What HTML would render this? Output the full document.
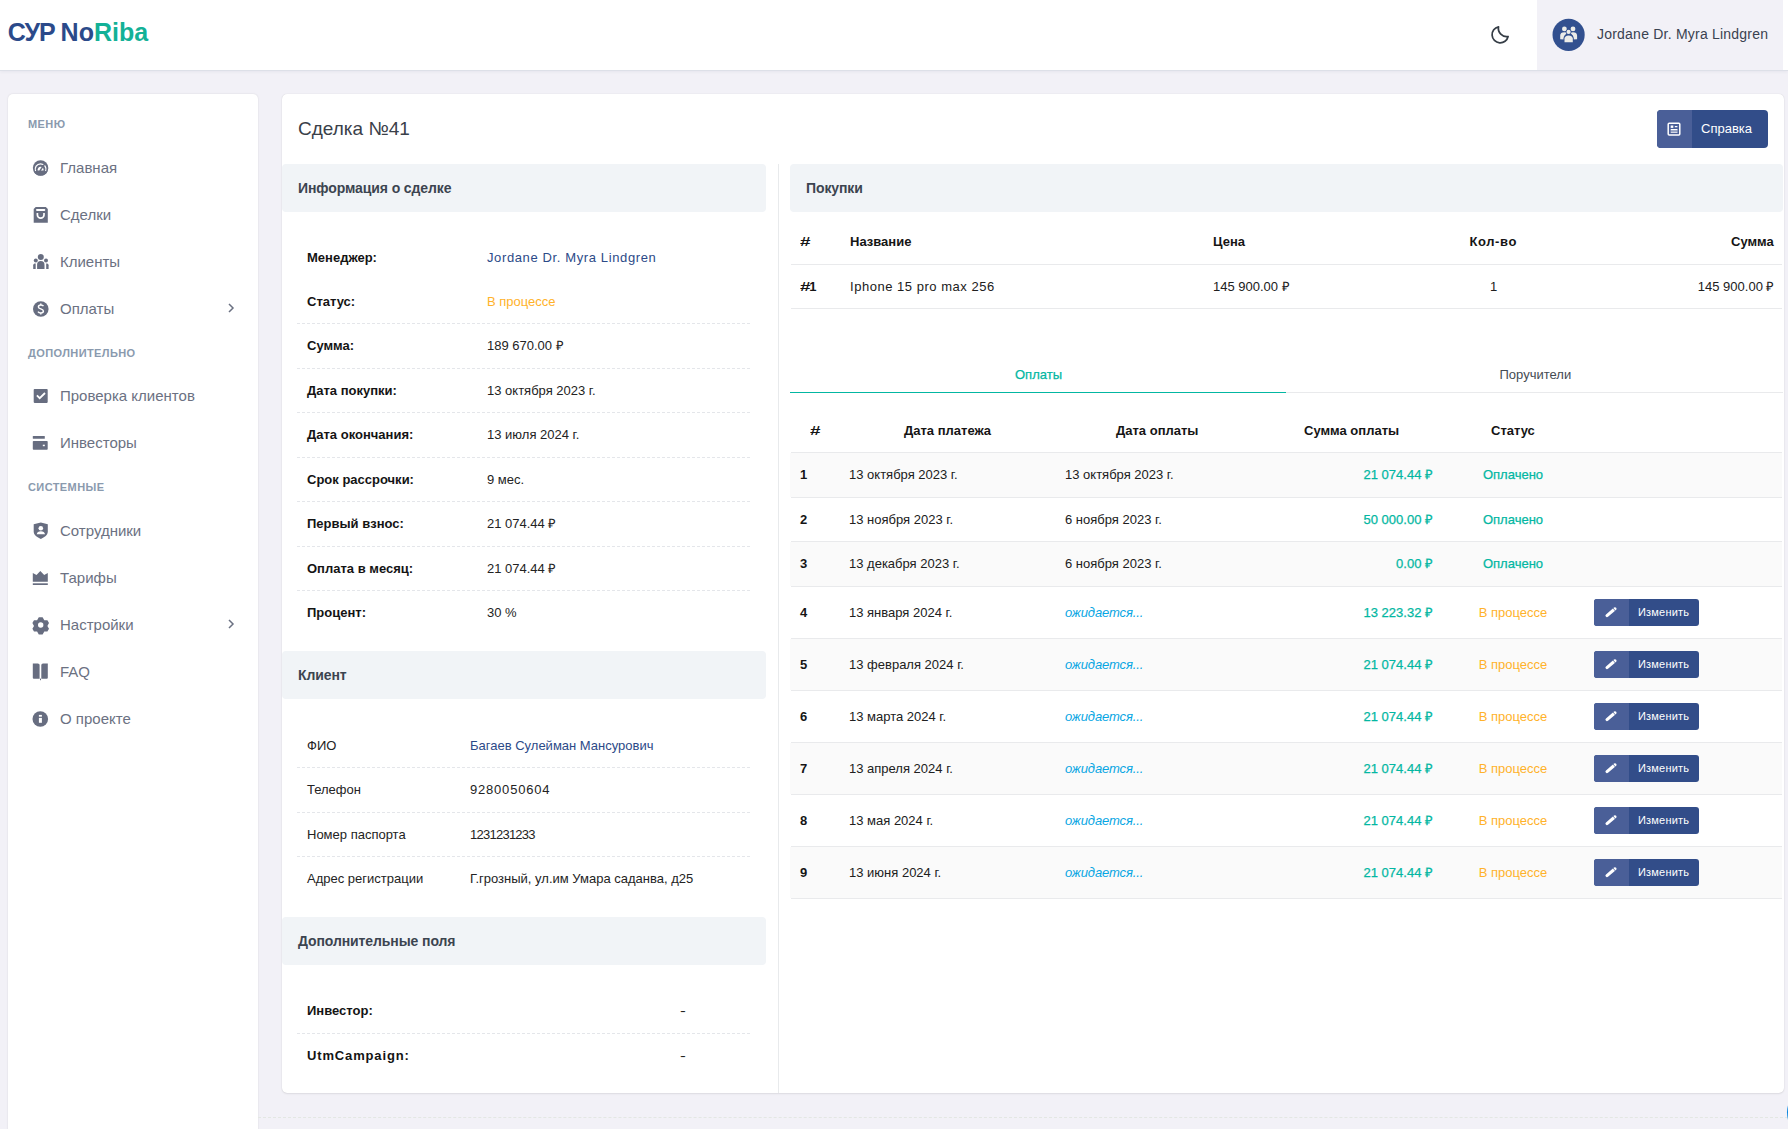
<!DOCTYPE html>
<html lang="ru">
<head>
<meta charset="utf-8">
<style>
*{box-sizing:border-box;margin:0;padding:0}
html,body{width:1788px;height:1129px;overflow:hidden}
body{background:#f2f1f7;font-family:"Liberation Sans",sans-serif;color:#222;position:relative}
.a{position:absolute;white-space:nowrap}
#hdr{position:absolute;left:0;top:0;width:1788px;height:71px;background:#fff;border-bottom:1px solid #dde0e8;box-shadow:0 1px 3px rgba(40,50,80,.06)}
#user{position:absolute;left:1537px;top:0;width:246px;height:70px;background:#f2f1f7}
#side{position:absolute;left:8px;top:94px;width:250px;height:1060px;background:#fff;border-radius:5px;box-shadow:0 0 2px rgba(0,0,0,.12)}
#main{position:absolute;left:282px;top:94px;width:1502px;height:999px;background:#fff;border-radius:5px;box-shadow:0 0 1px rgba(0,0,0,.16),0 1px 2px rgba(0,0,0,.08)}
.sl{font-size:11px;font-weight:700;color:#8a9aae;letter-spacing:.4px;line-height:14px}
.si{font-size:15px;color:#6b7182;line-height:18px}
.ic{position:absolute;width:16px;height:16px}
.chev{font-size:14px;color:#6b7182}
.sech{position:absolute;background:#f1f4f7;border-radius:4px;height:48px}
.lbl,.val,.th,.td,.si{margin-top:1px}
.sech span{position:absolute;left:16px;top:16px;letter-spacing:-.1px;font-size:14px;font-weight:700;color:#3c4450;line-height:17px;white-space:nowrap}
.lbl{font-size:13px;font-weight:700;color:#141414;line-height:16px}
.val{font-size:13px;color:#232323;line-height:16px}
.dash{position:absolute;height:0;border-top:1px dashed #e4e6ea}
.hl{position:absolute;height:1px;background:#e9eaec}
.th{font-size:13px;font-weight:700;color:#151515;line-height:16px}
.td{font-size:13px;color:#202020;line-height:16px}
.hash{display:inline-block;transform:scaleX(1.45);transform-origin:0 50%}
.teal{color:#03b7a2;-webkit-text-stroke:.25px #03b7a2}
.orange{color:#ffb22a}
.blue{color:#08a6e3;font-style:italic;letter-spacing:-.1px}
.stripe{position:absolute;left:790px;width:992px;background:#fafafa}
.btn{position:absolute;left:1594px;width:105px;height:27px;border-radius:3px;background:#324d89;overflow:hidden}
.btn i{position:absolute;left:0;top:0;width:35px;height:27px;background:#4a5f98}
.btn svg{position:absolute;left:10px;top:6px}
.btn span{position:absolute;left:44px;top:6px;font-size:11px;color:#fff;line-height:14px;letter-spacing:.2px}
</style>
</head>
<body>
<div id="hdr">
  <div class="a" style="left:7.7px;top:17px;font-size:25px;font-weight:700;line-height:30px;color:#2b4a8a"><span style="letter-spacing:-1px">СУР&nbsp;</span>No<span style="color:#13b197">Riba</span></div>
  <svg class="a" style="left:1488px;top:23px" width="24" height="24" viewBox="1488 23 24 24"><path d="M1498.5 26.8A8.1 8.1 0 1 0 1508.1 36.5A8.35 8.35 0 0 1 1498.5 26.8Z" fill="none" stroke="#353d46" stroke-width="1.75" stroke-linejoin="round"/></svg>
</div>
<div id="user">
  <svg class="a" style="left:15px;top:18px" width="34" height="34" viewBox="1552 18 34 34">
  <circle cx="1568.6" cy="34.8" r="16.1" fill="#32508f"/>
  <g fill="#ecece8">
  <circle cx="1564.4" cy="28.9" r="2.4"/><circle cx="1573" cy="28.9" r="2.4"/>
  <path d="M1560.2 39.3V35.5C1560.2 33.4 1561.6 32.2 1564.4 32.2C1565.6 32.2 1566.4 32.5 1566.9 33L1564.6 35.6V39.6Z"/>
  <path d="M1577.1 39.3V35.5C1577.1 33.4 1575.7 32.2 1573 32.2C1571.8 32.2 1571 32.5 1570.5 33L1572.8 35.6V39.6Z"/>
  </g>
  <circle cx="1568.6" cy="31.9" r="2.6" fill="#32508f"/>
  <path d="M1563.5 43V38.5C1563.5 36.2 1565.4 34.6 1568.6 34.6S1573.8 36.2 1573.8 38.5V43Z" fill="#32508f"/>
  <g fill="#ecece8">
  <circle cx="1568.6" cy="31.9" r="2.1"/>
  <path d="M1564.5 42.3V38.6C1564.5 36.7 1566 35.4 1568.6 35.4S1572.8 36.7 1572.8 38.6V42.3Z"/>
  </g>
  </svg>
  <div class="a" style="left:60px;top:26px;font-size:14px;color:#3a4250;line-height:17px;letter-spacing:.22px">Jordane Dr. Myra Lindgren</div>
</div>

<div id="side"></div>
<div class="a sl" style="left:28px;top:117px">МЕНЮ</div>
<div class="a sl" style="left:28px;top:346px">ДОПОЛНИТЕЛЬНО</div>
<div class="a sl" style="left:28px;top:480px">СИСТЕМНЫЕ</div>

<div class="a si" style="left:60px;top:158px">Главная</div>
<div class="a si" style="left:60px;top:205px">Сделки</div>
<div class="a si" style="left:60px;top:252px">Клиенты</div>
<div class="a si" style="left:60px;top:299px">Оплаты</div>
<div class="a si" style="left:60px;top:386px">Проверка клиентов</div>
<div class="a si" style="left:60px;top:433px">Инвесторы</div>
<div class="a si" style="left:60px;top:521px">Сотрудники</div>
<div class="a si" style="left:60px;top:568px">Тарифы</div>
<div class="a si" style="left:60px;top:615px">Настройки</div>
<div class="a si" style="left:60px;top:662px">FAQ</div>
<div class="a si" style="left:60px;top:709px">О проекте</div>
<svg class="a" style="left:227px;top:303px" width="8" height="10" viewBox="0 0 8 10"><path d="M2 1l4 4-4 4" fill="none" stroke="#6b7182" stroke-width="1.5"/></svg>
<svg class="a" style="left:227px;top:619px" width="8" height="10" viewBox="0 0 8 10"><path d="M2 1l4 4-4 4" fill="none" stroke="#6b7182" stroke-width="1.5"/></svg>

<!-- sidebar icons -->
<svg class="a" style="left:0;top:0" width="60" height="760" viewBox="0 0 60 760">
<g fill="#676d80">
<circle cx="40.6" cy="168" r="7.75"/>
<circle cx="40.6" cy="214.8" r="0" />
</g>
<path d="M35.6 171.2A5.4 5.4 0 1 1 45.6 171.2" fill="none" stroke="#fff" stroke-width="1.25"/>
<path d="M37.7 170.6A3 3 0 1 1 43.5 170.6Z" fill="#fff"/>
<path d="M40.2 170.4L44.4 164.4" stroke="#676d80" stroke-width="1.6" stroke-linecap="round"/>
<path d="M33.6 171.2H47.6A7.75 7.75 0 0 1 33.6 171.2Z" fill="#676d80"/>

<path d="M35.7 207H45.8L47.8 209V222.7H33.7V209Z" fill="#676d80"/>
<rect x="36" y="209.1" width="9.3" height="1.8" rx=".8" fill="#fff"/>
<path d="M37.4 213V214.9A3.3 3.3 0 0 0 44 214.9V213" fill="none" stroke="#fff" stroke-width="1.7"/>

<g fill="#676d80">
<circle cx="40.8" cy="257.1" r="3"/>
<circle cx="35.8" cy="260.6" r="2"/>
<circle cx="46" cy="260.6" r="2"/>
<path d="M37.1 269V264.8A3.7 3.7 0 0 1 44.5 264.8V269Z"/>
<path d="M33.2 269V265.2C33.2 264 34 263.5 35.7 263.5V269Z"/>
<path d="M48.6 269V265.2C48.6 264 47.8 263.5 46.2 263.5V269Z"/>
</g>

<circle cx="40.8" cy="309" r="7.8" fill="#676d80"/>
<path d="M43.5 306.2C43 305.4 42.2 305 40.9 305C39.4 305 38.4 305.8 38.4 306.9C38.4 309.3 43.4 308.4 43.4 311C43.4 312.2 42.3 313 40.8 313C39.4 313 38.5 312.5 38 311.6M40.8 303.6V305M40.8 313V314.4" fill="none" stroke="#fff" stroke-width="1.45"/>

<rect x="33.7" y="389.1" width="14" height="13.8" rx=".8" fill="#676d80"/>
<path d="M36.9 395.4L39.7 398.2L45 393" fill="none" stroke="#fff" stroke-width="1.8"/>

<g fill="#676d80">
<rect x="32.8" y="436.1" width="12" height="2.7" rx=".5"/>
<rect x="32.8" y="441" width="14.9" height="8.7" rx=".8"/>
</g>
<rect x="42.8" y="444.7" width="2" height="1.5" fill="#fff"/>

<path d="M40.8 522.6L47.8 524.2V531.5C47.8 535 44.5 537.3 40.8 538.9C37.1 537.3 33.7 535 33.7 531.5V524.2Z" fill="#676d80"/>
<circle cx="40.8" cy="528.2" r="2.3" fill="#fff"/>
<path d="M36.7 534.2A4.2 3.6 0 0 1 45 534.2Z" fill="#fff"/>

<g fill="#676d80">
<path d="M32.8 573.1L36.5 575.1L40.3 571L44.2 575.1L47.8 573.1V581.8H32.8Z"/>
<rect x="32.8" y="583.3" width="15" height="1.7"/>
</g>

<path fill="#676d80" d="M38.8 617.3h3.8l1.7 2.9 3.1.1 1.6 2.8-1.6 2.8 1.6 2.8-1.6 2.8-3.1.1-1.7 2.9h-3.8l-1.7-2.9-3.1-.1-1.6-2.8 1.6-2.8-1.6-2.8 1.6-2.8 3.1-.1z"/>
<circle cx="40.7" cy="625" r="2.7" fill="#fff"/>

<g fill="#676d80">
<path d="M32.8 663.4H37.9A1.7 1.7 0 0 1 39.6 665.1V678.7H33.8A1 1 0 0 1 32.8 677.7Z"/>
<path d="M47.8 663.4H43A1.7 1.7 0 0 0 41.3 665.1V678.7H46.8A1 1 0 0 0 47.8 677.7Z"/>
<rect x="40" y="678.6" width="1" height="1.6"/>
</g>

<circle cx="40.3" cy="719" r="7.8" fill="#676d80"/>
<rect x="38.9" y="714.9" width="3" height="1.8" fill="#fff"/>
<rect x="38.9" y="717.9" width="3" height="4.9" fill="#fff"/>
</svg>

<div class="a" style="left:258px;top:1117px;width:1530px;height:0;border-top:1px dashed #e3e7e3"></div>
<div class="a" style="left:1786.5px;top:1084.5px;width:55px;height:55px;border-radius:50%;background:#0a86df"></div>
<div id="main"></div>
<div class="a" style="left:298px;top:116.5px;font-size:19px;color:#3a4049;line-height:24px">Сделка №41</div>
<div class="a" style="left:1657px;top:110px;width:111px;height:38px;border-radius:4px;background:#324d89;overflow:hidden">
  <i style="position:absolute;left:0;top:0;width:35px;height:38px;background:#4a5f98"></i>
  <svg style="position:absolute;left:10px;top:12px" width="14" height="14" viewBox="1667 122 14 14"><rect x="1668.2" y="123.2" width="11.6" height="11.8" rx="1" fill="none" stroke="#fff" stroke-width="1.5"/><rect x="1670.7" y="125.5" width="2.6" height="2.4" fill="#fff"/><path d="M1674.8 126.6h2.6M1670.7 129.6h6.8M1670.7 132.3h6.8" stroke="#fff" stroke-width="1.1"/><rect x="1670.7" y="130.2" width="6.8" height="1.5" fill="#a9b3cc"/></svg>
  <span style="position:absolute;left:44px;top:11px;font-size:13px;color:#fff;line-height:16px;white-space:nowrap">Справка</span>
</div>

<!-- vertical divider -->
<div class="a" style="left:777.5px;top:164px;width:1.2px;height:929px;background:#e8eaec"></div>

<!-- left column -->
<div class="sech" style="left:282px;top:164px;width:484px"><span>Информация о сделке</span></div>
<div class="a lbl" style="left:307px;top:249px">Менеджер:</div>
<div class="a val" style="left:487px;top:249px;color:#2c4a88;letter-spacing:.62px">Jordane Dr. Myra Lindgren</div>
<div class="a lbl" style="left:307px;top:293px">Статус:</div>
<div class="a val orange" style="left:487px;top:293px">В процессе</div>
<div class="dash" style="left:297px;top:323px;width:453px"></div>
<div class="a lbl" style="left:307px;top:337px">Сумма:</div>
<div class="a val" style="left:487px;top:337px">189 670.00 ₽</div>
<div class="dash" style="left:297px;top:368px;width:453px"></div>
<div class="a lbl" style="left:307px;top:382px">Дата покупки:</div>
<div class="a val" style="left:487px;top:382px">13 октября 2023 г.</div>
<div class="dash" style="left:297px;top:412px;width:453px"></div>
<div class="a lbl" style="left:307px;top:426px">Дата окончания:</div>
<div class="a val" style="left:487px;top:426px">13 июля 2024 г.</div>
<div class="dash" style="left:297px;top:457px;width:453px"></div>
<div class="a lbl" style="left:307px;top:471px">Срок рассрочки:</div>
<div class="a val" style="left:487px;top:471px">9 мес.</div>
<div class="dash" style="left:297px;top:501px;width:453px"></div>
<div class="a lbl" style="left:307px;top:515px">Первый взнос:</div>
<div class="a val" style="left:487px;top:515px">21 074.44 ₽</div>
<div class="dash" style="left:297px;top:546px;width:453px"></div>
<div class="a lbl" style="left:307px;top:560px">Оплата в месяц:</div>
<div class="a val" style="left:487px;top:560px">21 074.44 ₽</div>
<div class="dash" style="left:297px;top:590px;width:453px"></div>
<div class="a lbl" style="left:307px;top:604px">Процент:</div>
<div class="a val" style="left:487px;top:604px">30 %</div>

<div class="sech" style="left:282px;top:651px;width:484px"><span>Клиент</span></div>
<div class="a val" style="left:307px;top:737px">ФИО</div>
<div class="a val" style="left:470px;top:737px;color:#2c4a88">Багаев Сулейман Мансурович</div>
<div class="dash" style="left:297px;top:767px;width:453px"></div>
<div class="a val" style="left:307px;top:781px">Телефон</div>
<div class="a val" style="left:470px;top:781px;letter-spacing:.8px">9280050604</div>
<div class="dash" style="left:297px;top:812px;width:453px"></div>
<div class="a val" style="left:307px;top:826px">Номер паспорта</div>
<div class="a val" style="left:470px;top:826px;letter-spacing:-.75px">1231231233</div>
<div class="dash" style="left:297px;top:856px;width:453px"></div>
<div class="a val" style="left:307px;top:870px">Адрес регистрации</div>
<div class="a val" style="left:470px;top:870px">Г.грозный, ул.им Умара саданва, д25</div>

<div class="sech" style="left:282px;top:917px;width:484px"><span>Дополнительные поля</span></div>
<div class="a lbl" style="left:307px;top:1002px">Инвестор:</div>
<div class="a val" style="left:679.5px;top:1002px"><span style="display:inline-block;transform:scaleX(1.35);transform-origin:0 0">-</span></div>
<div class="dash" style="left:297px;top:1033px;width:453px"></div>
<div class="a lbl" style="left:307px;top:1047px;letter-spacing:.85px">UtmCampaign:</div>
<div class="a val" style="left:679.5px;top:1047px"><span style="display:inline-block;transform:scaleX(1.35);transform-origin:0 0">-</span></div>

<!-- right column -->
<div class="sech" style="left:790px;top:164px;width:993px"><span>Покупки</span></div>
<div class="a th" style="left:800px;top:233px"><span class="hash">#</span></div>
<div class="a th" style="left:850px;top:233px">Название</div>
<div class="a th" style="left:1213px;top:233px">Цена</div>
<div class="a th" style="left:1469.5px;top:233px;letter-spacing:.6px">Кол-во</div>
<div class="a th" style="left:1731px;top:233px">Сумма</div>
<div class="hl" style="left:791px;top:264px;width:991px"></div>
<div class="a th" style="left:800px;top:278px"><span class="hash" style="margin-right:2px">#</span>1</div>
<div class="a td" style="left:850px;top:278px;letter-spacing:.52px">Iphone 15 pro max 256</div>
<div class="a td" style="left:1213px;top:278px">145 900.00 ₽</div>
<div class="a td" style="left:1490px;top:278px">1</div>
<div class="a td" style="right:13.5px;top:278px">145 900.00 ₽</div>
<div class="hl" style="left:791px;top:308px;width:991px"></div>

<!-- tabs -->
<div class="a" style="left:1015px;top:367px;font-size:13px;color:#03b7a2;line-height:16px;-webkit-text-stroke:.25px #03b7a2">Оплаты</div>
<div class="a" style="left:1499.5px;top:367px;font-size:13px;color:#454b53;line-height:16px">Поручители</div>
<div class="hl" style="left:1286px;top:392px;width:497px"></div>
<div class="a" style="left:790px;top:392px;width:496px;height:1px;background:#03b7a2"></div>

<!-- payments -->
<div class="a th" style="left:809.5px;top:422px"><span class="hash">#</span></div>
<div class="a th" style="left:904px;top:422px">Дата платежа</div>
<div class="a th" style="left:1116px;top:422px">Дата оплаты</div>
<div class="a th" style="left:1304px;top:422px">Сумма оплаты</div>
<div class="a th" style="left:1491px;top:422px">Статус</div>
<div class="hl" style="left:791px;top:452px;width:991px"></div>

<div class="stripe" style="top:453px;height:44px"></div>
<div class="hl" style="left:791px;top:497px;width:991px"></div>
<div class="hl" style="left:791px;top:541px;width:991px"></div>
<div class="stripe" style="top:542px;height:44px"></div>
<div class="hl" style="left:791px;top:586px;width:991px"></div>
<div class="hl" style="left:791px;top:638px;width:991px"></div>
<div class="stripe" style="top:639px;height:51px"></div>
<div class="hl" style="left:791px;top:690px;width:991px"></div>
<div class="hl" style="left:791px;top:742px;width:991px"></div>
<div class="stripe" style="top:743px;height:51px"></div>
<div class="hl" style="left:791px;top:794px;width:991px"></div>
<div class="hl" style="left:791px;top:846px;width:991px"></div>
<div class="stripe" style="top:847px;height:51px"></div>
<div class="hl" style="left:791px;top:898px;width:991px"></div>

<div class="a th" style="left:800px;top:466px">1</div>
<div class="a td" style="left:849px;top:466px">13 октября 2023 г.</div>
<div class="a td" style="left:1065px;top:466px">13 октября 2023 г.</div>
<div class="a td teal" style="right:355px;top:466px">21 074.44 ₽</div>
<div class="a td teal" style="left:1413px;width:200px;text-align:center;top:466px">Оплачено</div>
<div class="a th" style="left:800px;top:511px">2</div>
<div class="a td" style="left:849px;top:511px">13 ноября 2023 г.</div>
<div class="a td" style="left:1065px;top:511px">6 ноября 2023 г.</div>
<div class="a td teal" style="right:355px;top:511px">50 000.00 ₽</div>
<div class="a td teal" style="left:1413px;width:200px;text-align:center;top:511px">Оплачено</div>
<div class="a th" style="left:800px;top:555px">3</div>
<div class="a td" style="left:849px;top:555px">13 декабря 2023 г.</div>
<div class="a td" style="left:1065px;top:555px">6 ноября 2023 г.</div>
<div class="a td teal" style="right:355px;top:555px">0.00 ₽</div>
<div class="a td teal" style="left:1413px;width:200px;text-align:center;top:555px">Оплачено</div>
<div class="a th" style="left:800px;top:604px">4</div>
<div class="a td" style="left:849px;top:604px">13 января 2024 г.</div>
<div class="a td blue" style="left:1065px;top:604px">ожидается...</div>
<div class="a td teal" style="right:355px;top:604px">13 223.32 ₽</div>
<div class="a td orange" style="left:1413px;width:200px;text-align:center;top:604px">В процессе</div>
<div class="btn" style="top:599px"><i></i><svg width="14" height="14" viewBox="0 0 14 14"><path d="M3 10.6L11 3.8" stroke="#fff" stroke-width="3.1" stroke-linecap="round"/><path d="M8.9 2.9L11.5 6.1" stroke="#4a5f98" stroke-width=".8"/></svg><span>Изменить</span></div>
<div class="a th" style="left:800px;top:656px">5</div>
<div class="a td" style="left:849px;top:656px">13 февраля 2024 г.</div>
<div class="a td blue" style="left:1065px;top:656px">ожидается...</div>
<div class="a td teal" style="right:355px;top:656px">21 074.44 ₽</div>
<div class="a td orange" style="left:1413px;width:200px;text-align:center;top:656px">В процессе</div>
<div class="btn" style="top:651px"><i></i><svg width="14" height="14" viewBox="0 0 14 14"><path d="M3 10.6L11 3.8" stroke="#fff" stroke-width="3.1" stroke-linecap="round"/><path d="M8.9 2.9L11.5 6.1" stroke="#4a5f98" stroke-width=".8"/></svg><span>Изменить</span></div>
<div class="a th" style="left:800px;top:708px">6</div>
<div class="a td" style="left:849px;top:708px">13 марта 2024 г.</div>
<div class="a td blue" style="left:1065px;top:708px">ожидается...</div>
<div class="a td teal" style="right:355px;top:708px">21 074.44 ₽</div>
<div class="a td orange" style="left:1413px;width:200px;text-align:center;top:708px">В процессе</div>
<div class="btn" style="top:703px"><i></i><svg width="14" height="14" viewBox="0 0 14 14"><path d="M3 10.6L11 3.8" stroke="#fff" stroke-width="3.1" stroke-linecap="round"/><path d="M8.9 2.9L11.5 6.1" stroke="#4a5f98" stroke-width=".8"/></svg><span>Изменить</span></div>
<div class="a th" style="left:800px;top:760px">7</div>
<div class="a td" style="left:849px;top:760px">13 апреля 2024 г.</div>
<div class="a td blue" style="left:1065px;top:760px">ожидается...</div>
<div class="a td teal" style="right:355px;top:760px">21 074.44 ₽</div>
<div class="a td orange" style="left:1413px;width:200px;text-align:center;top:760px">В процессе</div>
<div class="btn" style="top:755px"><i></i><svg width="14" height="14" viewBox="0 0 14 14"><path d="M3 10.6L11 3.8" stroke="#fff" stroke-width="3.1" stroke-linecap="round"/><path d="M8.9 2.9L11.5 6.1" stroke="#4a5f98" stroke-width=".8"/></svg><span>Изменить</span></div>
<div class="a th" style="left:800px;top:812px">8</div>
<div class="a td" style="left:849px;top:812px">13 мая 2024 г.</div>
<div class="a td blue" style="left:1065px;top:812px">ожидается...</div>
<div class="a td teal" style="right:355px;top:812px">21 074.44 ₽</div>
<div class="a td orange" style="left:1413px;width:200px;text-align:center;top:812px">В процессе</div>
<div class="btn" style="top:807px"><i></i><svg width="14" height="14" viewBox="0 0 14 14"><path d="M3 10.6L11 3.8" stroke="#fff" stroke-width="3.1" stroke-linecap="round"/><path d="M8.9 2.9L11.5 6.1" stroke="#4a5f98" stroke-width=".8"/></svg><span>Изменить</span></div>
<div class="a th" style="left:800px;top:864px">9</div>
<div class="a td" style="left:849px;top:864px">13 июня 2024 г.</div>
<div class="a td blue" style="left:1065px;top:864px">ожидается...</div>
<div class="a td teal" style="right:355px;top:864px">21 074.44 ₽</div>
<div class="a td orange" style="left:1413px;width:200px;text-align:center;top:864px">В процессе</div>
<div class="btn" style="top:859px"><i></i><svg width="14" height="14" viewBox="0 0 14 14"><path d="M3 10.6L11 3.8" stroke="#fff" stroke-width="3.1" stroke-linecap="round"/><path d="M8.9 2.9L11.5 6.1" stroke="#4a5f98" stroke-width=".8"/></svg><span>Изменить</span></div>
</body>
</html>
